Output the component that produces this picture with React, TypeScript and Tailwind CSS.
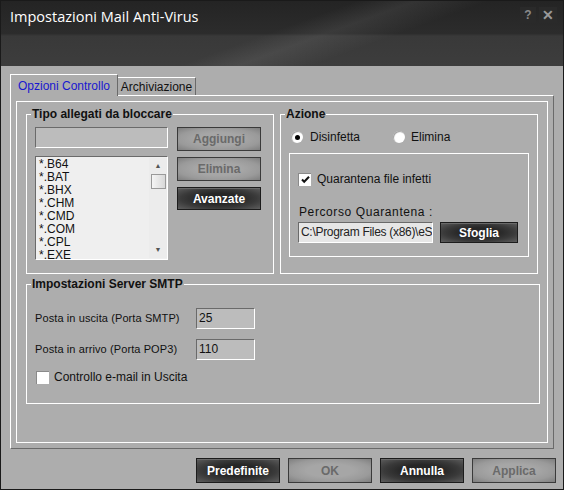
import React from "react";

const font = "font-['Liberation_Sans',Arial,sans-serif]";

function DarkBtn({ label, w = "w-[84px]", h = "h-[25px]" }: { label: string; w?: string; h?: string }) {
  return (
    <div
      className={`${w} ${h} flex items-center justify-center border border-[#1c1c1c] bg-[radial-gradient(ellipse_at_center,#262626_35%,#3a3a3a_65%,#5e5e5e_100%)] text-white font-bold text-[12px] shadow-[inset_0_1px_0_#6a6a6a]`}
    >
      {label}
    </div>
  );
}

function GrayBtn({ label, w = "w-[84px]", h = "h-[25px]" }: { label: string; w?: string; h?: string }) {
  return (
    <div
      className={`${w} ${h} flex items-center justify-center border border-[#3a3a3a] bg-[radial-gradient(ellipse_at_center,#a6a6a6_40%,#9a9a9a_70%,#7e7e7e_100%)] text-[#6a6a6a] font-bold text-[12px]`}
    >
      {label}
    </div>
  );
}

function Sunken({ className = "", children }: { className?: string; children?: React.ReactNode }) {
  return (
    <div className={`border-t border-l border-[#6a6a6a] border-b-white border-r-white border-b border-r ${className}`}>
      {children}
    </div>
  );
}

function Checkbox({ checked }: { checked?: boolean }) {
  return (
    <div className="w-[13px] h-[13px] bg-white border-t border-l border-[#8a8a8a] flex items-center justify-center">
      {checked && (
        <svg width="9" height="9" viewBox="0 0 9 9">
          <path d="M1 4.5 L3.2 6.8 L8 1.8" stroke="#111" strokeWidth="2" fill="none" />
        </svg>
      )}
    </div>
  );
}

function Radio({ checked }: { checked?: boolean }) {
  return (
    <div className="w-[12px] h-[12px] rounded-full bg-white shadow-[inset_1px_1px_1px_#9a9a9a] flex items-center justify-center">
      {checked && <div className="w-[5px] h-[5px] rounded-full bg-black" />}
    </div>
  );
}

export default function App() {
  const items = ["*.B64", "*.BAT", "*.BHX", "*.CHM", "*.CMD", "*.COM", "*.CPL", "*.EXE"];
  return (
    <div className={`w-[564px] h-[490px] bg-[#adadad] border border-[#1a1a1a] flex flex-col ${font} text-[12px] text-[#111]`}>
      {/* Title bar */}
      <div className="h-[65px] shrink-0 flex flex-col bg-[linear-gradient(160deg,transparent_48%,rgba(255,255,255,0.07)_56%,transparent_66%),linear-gradient(180deg,#242424_0%,#2c2c2c_50%,#393939_54%,#3d3d3d_100%)]">
        <div className="h-[34px] flex items-start justify-between pl-[9px] pr-[6px]">
          <div className="text-white text-[14.5px] mt-[5px] font-['Open_Sans',sans-serif]">
            Impostazioni Mail Anti-Virus
          </div>
          <div className="flex gap-[3px] mt-[6px]">
            <div className="w-[16px] h-[16px] bg-[#2a2a2a] text-[#8a8a8a] text-[12px] font-bold flex items-center justify-center">?</div>
            <div className="w-[18px] h-[16px] bg-[#2a2a2a] text-[#9a9a9a] text-[14px] font-bold flex items-center justify-center">✕</div>
          </div>
        </div>
      </div>

      {/* Body */}
      <div className="flex-1 flex flex-col px-[9px] pt-[7px]">
        {/* Tabs */}
        <div className="flex items-end h-[22px] relative z-10">
          <div className="h-[22px] w-[108px] border-t border-l border-white border-r border-r-[#6a6a6a] bg-[#adadad] text-[#1818d0] flex items-center justify-center pt-[2px] -mb-px pb-px">
            Opzioni Controllo
          </div>
          <div className="h-[18px] w-[78px] border-t border-white border-r border-r-[#6a6a6a] bg-[#adadad] flex items-center justify-center">
            Archiviazione
          </div>
        </div>
        {/* Tab panel */}
        <div className="h-[354px] w-[544px] border-t border-l border-white border-r border-b border-r-[#6a6a6a] border-b-[#6a6a6a] p-[5px]">
          <div className="h-full border border-white flex flex-col gap-[3px] px-[9px] pt-[5px]">
            <div className="flex gap-[6px]">
              {/* Tipo allegati */}
              <fieldset className="w-[250px] h-[167px] border border-white px-[8px] m-0">
                <legend className="font-bold px-[1px] ml-[-4px] leading-[14px]">Tipo allegati da bloccare</legend>
                <div className="flex gap-[9px] mt-[6px]">
                  <div className="flex flex-col gap-[8px]">
                    <Sunken className="w-[133px] h-[21px] bg-[#bcbcbc]" />
                    <Sunken className="w-[133px] h-[104px] bg-[#efefef] flex">
                      <div className="flex-1 pl-[3px] pt-[1px] leading-[13px] text-[12px] overflow-hidden">
                        {items.map((it) => (
                          <div key={it}>{it}</div>
                        ))}
                      </div>
                      <div className="w-[18px] flex flex-col items-center bg-[#ececec] my-[1px]">
                        <div className="text-[7px] leading-[10px] text-[#555] mt-[3px]">▲</div>
                        <div className="w-[15px] h-[15px] mt-[3px] border border-[#9a9a9a] bg-[linear-gradient(90deg,#f5f5f5,#d8d8d8)]" />
                        <div className="flex-1" />
                        <div className="text-[7px] leading-[10px] text-[#555] mb-[3px]">▼</div>
                      </div>
                    </Sunken>
                  </div>
                  <div className="flex flex-col gap-[6px] pt-[0px]">
                    <GrayBtn label="Aggiungi" w="w-[84px]" h="h-[24px]" />
                    <GrayBtn label="Elimina" w="w-[84px]" h="h-[24px]" />
                    <DarkBtn label="Avanzate" w="w-[84px]" h="h-[23px]" />
                  </div>
                </div>
              </fieldset>

              {/* Azione */}
              <fieldset className="w-[258px] h-[167px] border border-white px-[8px] m-0">
                <legend className="font-bold px-[1px] ml-[-4px] leading-[14px]">Azione</legend>
                <div className="flex items-center mt-[9px] h-[14px]">
                  <div className="flex items-center gap-[7px] w-[104px] pl-[2px]">
                    <Radio checked />
                    <span>Disinfetta</span>
                  </div>
                  <div className="flex items-center gap-[6px]">
                    <Radio />
                    <span>Elimina</span>
                  </div>
                </div>
                <div className="mt-[9px] w-[240px] h-[104px] border border-white px-[8px] pt-[16px]">
                  <div className="flex items-center gap-[6px]">
                    <Checkbox checked />
                    <span>Quarantena file infetti</span>
                  </div>
                  <div className="mt-[17px] leading-[14px] pl-[1px] tracking-[0.6px]">Percorso Quarantena :</div>
                  <div className="flex gap-[7px] mt-[3px]">
                    <Sunken className="w-[135px] h-[21px] bg-[#e6e6e6] text-[#222] overflow-hidden whitespace-nowrap pl-[2px] leading-[19px] tracking-[-0.3px]">
                      C:\Program Files (x86)\eSc
                    </Sunken>
                    <DarkBtn label="Sfoglia" w="w-[78px]" h="h-[21px]" />
                  </div>
                </div>
              </fieldset>
            </div>

            {/* SMTP */}
            <fieldset className="w-[514px] h-[127px] border border-white px-[8px] m-0">
              <legend className="font-bold px-[1px] ml-[-4px] leading-[14px]">Impostazioni Server SMTP</legend>
              <div className="flex items-center mt-[17px]">
                <span className="w-[161px] text-[11px] tracking-[0.1px]">Posta in uscita (Porta SMTP)</span>
                <Sunken className="w-[59px] h-[21px] bg-[#bcbcbc] pl-[2px] leading-[19px]">25</Sunken>
              </div>
              <div className="flex items-center mt-[10px]">
                <span className="w-[161px] text-[11px] tracking-[0.1px]">Posta in arrivo (Porta POP3)</span>
                <Sunken className="w-[59px] h-[21px] bg-[#bcbcbc] pl-[2px] leading-[19px]">110</Sunken>
              </div>
              <div className="flex items-center gap-[5px] mt-[8px] pl-[1px]">
                <Checkbox />
                <span>Controllo e-mail in Uscita</span>
              </div>
            </fieldset>
          </div>
        </div>

        {/* Footer */}
        <div className="flex justify-end gap-[8px] mt-[9px] mr-[-2px]">
          <DarkBtn label="Predefinite" />
          <GrayBtn label="OK" />
          <DarkBtn label="Annulla" />
          <GrayBtn label="Applica" />
        </div>
      </div>
    </div>
  );
}
